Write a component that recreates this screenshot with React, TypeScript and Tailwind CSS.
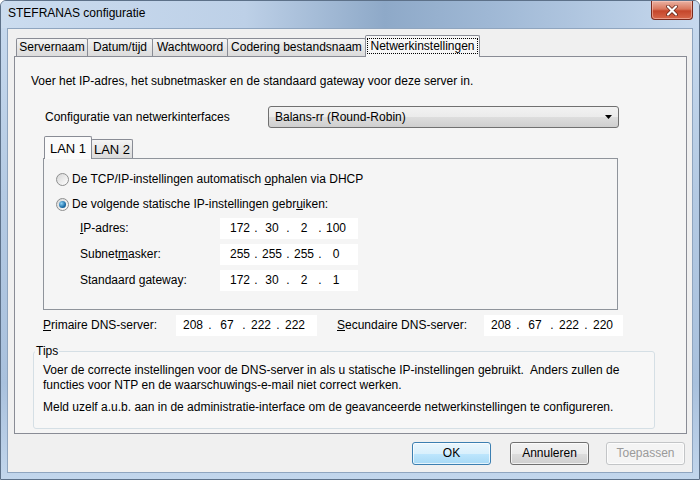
import React from "react";

const font = "font-['Liberation_Sans',Arial,sans-serif]";

function Radio({ checked }: { checked?: boolean }) {
  return (
    <span className="w-[13px] h-[13px] rounded-full border border-[#8e8f8f] bg-[linear-gradient(135deg,#d6d6d6,#ffffff)] flex items-center justify-center shrink-0">
      {checked && (
        <span className="w-[7px] h-[7px] rounded-full bg-[radial-gradient(circle_at_35%_35%,#8fd3f6,#1b6ea8_60%,#0c3f6e)]" />
      )}
    </span>
  );
}

function IpBox({ parts, className, seg, dot }: { parts: string[]; className: string; seg: string; dot: string }) {
  return (
    <div className={`flex items-center h-[21px] bg-white ${className}`}>
      {parts.map((p, i) => (
        <React.Fragment key={i}>
          <span className={`${seg} text-center`}>{p}</span>
          {i < 3 && <span className={`${dot} text-center`}>.</span>}
        </React.Fragment>
      ))}
    </div>
  );
}

function Tab({ label, className }: { label: string; className: string }) {
  return (
    <div
      className={`h-[18px] -ml-px first:ml-0 border border-b-0 border-[#898c95] rounded-t-[2px] bg-[linear-gradient(180deg,#f5f5f5,#e6e6e6_50%,#dcdcdc)] flex items-center justify-center ${className}`}
    >
      {label}
    </div>
  );
}

function Button({ label, kind }: { label: string; kind?: "default" | "disabled" }) {
  const look =
    kind === "default"
      ? "border-[#3c7fb1] bg-[linear-gradient(180deg,#eaf6fd,#d9f0fc_50%,#bee6fd_51%,#a7d9f5)] text-black"
      : kind === "disabled"
      ? "border-[#c3c5c7] bg-[#f4f4f4] text-[#9a9a9a]"
      : "border-[#707070] bg-[linear-gradient(180deg,#f2f2f2,#ebebeb_50%,#dddddd_51%,#cfcfcf)] text-black";
  return (
    <button className={`w-[79px] h-[23px] rounded-[3px] border ${look} shadow-[inset_0_0_0_1px_rgba(255,255,255,0.7)]`}>
      {label}
    </button>
  );
}

export default function App() {
  return (
    <div className={`${font} text-[12px] leading-[15px] text-black w-[700px] h-[480px] overflow-hidden rounded-t-[6px] border border-[#5d7189] bg-[linear-gradient(180deg,#c9dbef,#b4cae3_40%,#a9c1dd_80%,#c2d6ec)]`}>
      {/* title bar */}
      <div className="h-[27px] flex justify-between bg-[linear-gradient(90deg,#cbdcef_0%,#bdd0e7_35%,#8ea9c8_55%,#9fb8d5_70%,#c7d9ee_100%)]">
        <div className="pl-[7px] pt-[5px] text-[12px]">STEFRANAS configuratie</div>
        <div className="mr-[6px] w-[42px] h-[19px] rounded-b-[4px] border border-t-0 border-[#7a2a1d] bg-[linear-gradient(180deg,#eab2a3,#d9775d_45%,#c5462b_55%,#d7674a)] flex items-center justify-center shadow-[inset_0_0_0_1px_rgba(255,210,200,0.5)]">
          <svg width="12" height="11" viewBox="0 0 12 11">
            <path d="M2 1.5 L10 9.5 M10 1.5 L2 9.5" stroke="#5c1d10" strokeWidth="3.6" strokeLinecap="round" />
            <path d="M2 1.5 L10 9.5 M10 1.5 L2 9.5" stroke="#ffffff" strokeWidth="2.2" strokeLinecap="round" />
          </svg>
        </div>
      </div>

      {/* client area */}
      <div className="ml-[6px] w-[686px] h-[445px] border border-[#8fa5bf] bg-[#f0f0f0] px-[6px] pt-[6px]">
        {/* tab strip */}
        <div className="flex items-end h-[21px] pl-[2px]">
          <Tab label="Servernaam" className="w-[72px]" />
          <Tab label="Datum/tijd" className="w-[66px]" />
          <Tab label="Wachtwoord" className="w-[76px]" />
          <Tab label="Codering bestandsnaam" className="w-[139px]" />
          <div className="-ml-px h-[22px] -mb-px relative w-[115px] border border-b-0 border-[#898c95] rounded-t-[2px] bg-[#f6f6f6] flex items-start justify-center pt-[2px]">
            <span className="border border-dotted border-black px-[2px] leading-[14px]">Netwerkinstellingen</span>
          </div>
        </div>

        {/* panel */}
        <div className="w-[673px] h-[378px] border border-[#898c95] bg-[#f5f5f5] pt-[17px]">
          <div className="pl-[16px]">Voer het IP-adres, het subnetmasker en de standaard gateway voor deze server in.</div>

          <div className="flex items-center mt-[17px] pl-[30px]">
            <div className="w-[223px]">Configuratie van netwerkinterfaces</div>
            <div className="w-[351px] h-[22px] rounded-[3px] border border-[#707070] bg-[linear-gradient(180deg,#f2f2f2,#ebebeb_50%,#dddddd_51%,#cfcfcf)] flex items-center justify-between pl-[6px] pr-[6px]">
              <span>Balans-rr (Round-Robin)</span>
              <svg width="7" height="4" viewBox="0 0 7 4">
                <path d="M0 0 H7 L3.5 4 Z" fill="#000" />
              </svg>
            </div>
          </div>

          {/* LAN tabs */}
          <div className="ml-[28px] mt-[9px] w-[575px]">
            <div className="flex items-end h-[21px] pl-[1px]">
              <div className="h-[23px] -mb-px relative w-[48px] border border-b-0 border-[#898c95] rounded-t-[2px] bg-[#fbfbfb] flex items-center justify-center text-[13px]">
                LAN 1
              </div>
              <div className="-ml-px h-[19px] w-[42px] border border-b-0 border-[#898c95] rounded-t-[2px] bg-[linear-gradient(180deg,#f5f5f5,#e6e6e6_50%,#dcdcdc)] flex items-center justify-center text-[13px]">
                LAN 2
              </div>
            </div>
            <div className="h-[152px] border border-[#8f949b] bg-[#f5f5f5] pt-[12px] pl-[12px]">
              <div className="flex items-center gap-[3px] h-[16px]">
                <Radio />
                <span>
                  De TCP/IP-instellingen automatisch <u>o</u>phalen via DHCP
                </span>
              </div>
              <div className="flex items-center gap-[3px] h-[16px] mt-[9px]">
                <Radio checked />
                <span>
                  De volgende statische IP-instellingen gebr<u>u</u>iken:
                </span>
              </div>
              <div className="flex flex-col gap-[5px] mt-[6px] pl-[24px]">
                <div className="flex items-center">
                  <div className="w-[140px]">
                    <u>I</u>P-adres:
                  </div>
                  <IpBox parts={["172", "30", "2", "100"]} className="w-[138px] pl-[8px]" seg="w-[24px]" dot="w-[8px]" />
                </div>
                <div className="flex items-center">
                  <div className="w-[140px]">
                    Subnet<u>m</u>asker:
                  </div>
                  <IpBox parts={["255", "255", "255", "0"]} className="w-[138px] pl-[8px]" seg="w-[24px]" dot="w-[8px]" />
                </div>
                <div className="flex items-center">
                  <div className="w-[140px]">
                    Standaard <u>g</u>ateway:
                  </div>
                  <IpBox parts={["172", "30", "2", "1"]} className="w-[138px] pl-[8px]" seg="w-[24px]" dot="w-[8px]" />
                </div>
              </div>
            </div>
          </div>

          {/* DNS row */}
          <div className="flex items-center mt-[5px] pl-[28px]">
            <div className="w-[133px] whitespace-nowrap">
              <u>P</u>rimaire DNS-server:
            </div>
            <IpBox parts={["208", "67", "222", "222"]} className="w-[141px] pl-[4px]" seg="w-[26px]" dot="w-[8px]" />
            <div className="w-[167px] pl-[20px] whitespace-nowrap">
              <u>S</u>ecundaire DNS-server:
            </div>
            <IpBox parts={["208", "67", "222", "220"]} className="w-[139px] pl-[4px]" seg="w-[26px]" dot="w-[8px]" />
          </div>

          {/* Tips */}
          <fieldset className="ml-[18px] mt-[8px] w-[622px] border border-[#d5dfe5] rounded-[3px] bg-[#f7f7f7] pl-[9px] pr-[8px] pt-[4px] pb-[13px]">
            <legend className="-ml-[8px] px-[1px]">Tips</legend>
            <p>
              Voer de correcte instellingen voor de DNS-server in als u statische IP-instellingen gebruikt.&nbsp; Anders zullen de functies voor NTP en de waarschuwings-e-mail niet correct werken.
            </p>
            <p className="mt-[7px]">Meld uzelf a.u.b. aan in de administratie-interface om de geavanceerde netwerkinstellingen te configureren.</p>
          </fieldset>
        </div>

        {/* buttons */}
        <div className="flex justify-end gap-[19px] mt-[8px] pr-[1px]">
          <Button label="OK" kind="default" />
          <div className="flex gap-[17px]">
            <Button label="Annuleren" />
            <Button label="Toepassen" kind="disabled" />
          </div>
        </div>
      </div>
    </div>
  );
}
